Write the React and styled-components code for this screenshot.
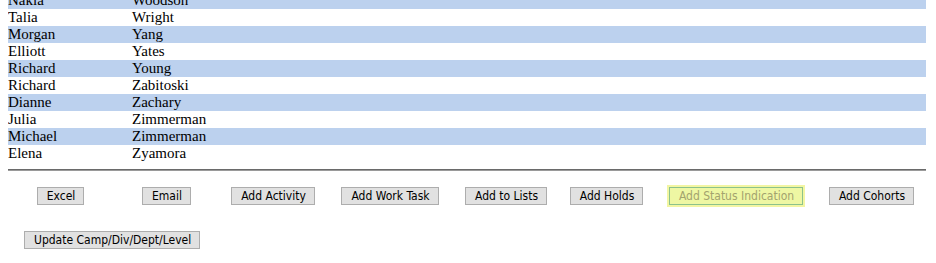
import React from "react";
import styled, { createGlobalStyle } from "styled-components";

const Global = createGlobalStyle`
  html, body { background: #ffffff; }
  body { margin: 0 8px; overflow: hidden; }
`;

const Page = styled.div`
  margin-top: -8px;
  width: 918px;
`;

const List = styled.div`
  display: flex;
  flex-direction: column;
  font-family: "Liberation Serif", "Times New Roman", serif;
  font-size: 15px;
  color: #000;
`;

const Row = styled.div`
  display: grid;
  grid-template-columns: 124px 1fr;
  height: 17px;
  line-height: 17px;
  background: ${(p) => (p.$alt ? "#bcd1ee" : "#ffffff")};
`;

const Cell = styled.div`
  white-space: nowrap;
`;

const Rule = styled.hr`
  margin: 7px 0 0;
  border: 0;
  border-top: 1px solid #6a6a6a;
  border-bottom: 1px solid #9a9a9a;
  height: 0;
`;

const ActionRow = styled.div`
  display: grid;
  grid-template-columns: 105px 107px 106px 128px 104px 97px 162px 109px;
  justify-items: center;
  align-items: center;
  margin-top: 16px;
  width: 922px;
`;

const SecondRow = styled.div`
  display: flex;
  padding-left: 16px;
  margin-top: 26px;
`;

const Button = styled.button`
  box-sizing: border-box;
  height: 18px;
  margin: 0;
  padding: 1px 8px 0 9px;
  border: 1px solid ${(p) => (p.$active ? "#8cc28c" : "#adadad")};
  background: ${(p) => (p.$active ? "#eef7a3" : "#e1e1e1")};
  color: ${(p) => (p.$active ? "#a3a36e" : "#000000")};
  box-shadow: ${(p) => (p.$active ? "0 0 0 2px #f2f6a2" : "none")};
  font-family: "DejaVu Sans Condensed", "DejaVu Sans", Tahoma, sans-serif;
  font-size: 12px;
  line-height: 15px;
  white-space: nowrap;
  border-radius: 0;
  cursor: pointer;
`;

const people = [
  ["Nakia", "Woodson"],
  ["Talia", "Wright"],
  ["Morgan", "Yang"],
  ["Elliott", "Yates"],
  ["Richard", "Young"],
  ["Richard", "Zabitoski"],
  ["Dianne", "Zachary"],
  ["Julia", "Zimmerman"],
  ["Michael", "Zimmerman"],
  ["Elena", "Zyamora"],
];

const actions = [
  "Excel",
  "Email",
  "Add Activity",
  "Add Work Task",
  "Add to Lists",
  "Add Holds",
  "Add Status Indication",
  "Add Cohorts",
];

export default function App() {
  return (
    <>
      <Global />
      <Page>
        <List>
          {people.map(([first, last], i) => (
            <Row key={i} $alt={i % 2 === 0}>
              <Cell>{first}</Cell>
              <Cell>{last}</Cell>
            </Row>
          ))}
        </List>
        <Rule />
        <ActionRow>
          {actions.map((a) => (
            <Button key={a} $active={a === "Add Status Indication"}>
              {a}
            </Button>
          ))}
        </ActionRow>
        <SecondRow>
          <Button>Update Camp/Div/Dept/Level</Button>
        </SecondRow>
      </Page>
    </>
  );
}
